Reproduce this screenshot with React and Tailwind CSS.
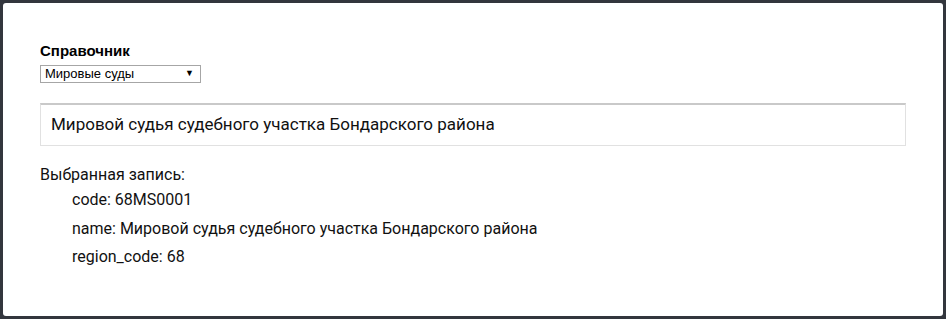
export default function App() {
  return (
    <div className="w-[946px] h-[319px] bg-[#33363d] p-[3px]">
      <div className="h-full bg-white rounded-[3px] px-[37px] pt-[39px]">
        <div className="text-[15px] font-bold text-black leading-[17px]" style={{ fontFamily: '"Liberation Sans", Arial, sans-serif' }}>
          Справочник
        </div>
        <div
          className="mt-[6px] w-[161px] h-[18px] border border-[#a6a6a6] flex items-center justify-between pl-[4px] pr-[6px] text-[13px] text-black"
          style={{ fontFamily: '"Liberation Sans", Arial, sans-serif' }}
        >
          <span>Мировые суды</span>
          <span className="text-[9px]">▼</span>
        </div>
        <div
          className="mt-[20px] h-[43px] border border-[#e1e1e1] border-t-2 border-t-[#c9c9c9] flex items-center pl-[10px] text-[17px] text-[#111]"
          style={{ fontFamily: 'Roboto, sans-serif' }}
        >
          Мировой судья судебного участка Бондарского района
        </div>
        <div className="mt-[19px] text-[16px] text-[#111]" style={{ fontFamily: 'Roboto, sans-serif' }}>
          <div className="leading-[20px]">Выбранная запись:</div>
          <ul className="pl-[32px]">
            <li className="leading-[20px] mt-[5px]">code: 68MS0001</li>
            <li className="leading-[20px] mt-[9px]">name: Мировой судья судебного участка Бондарского района</li>
            <li className="leading-[20px] mt-[8px]">region_code: 68</li>
          </ul>
        </div>
      </div>
    </div>
  );
}
